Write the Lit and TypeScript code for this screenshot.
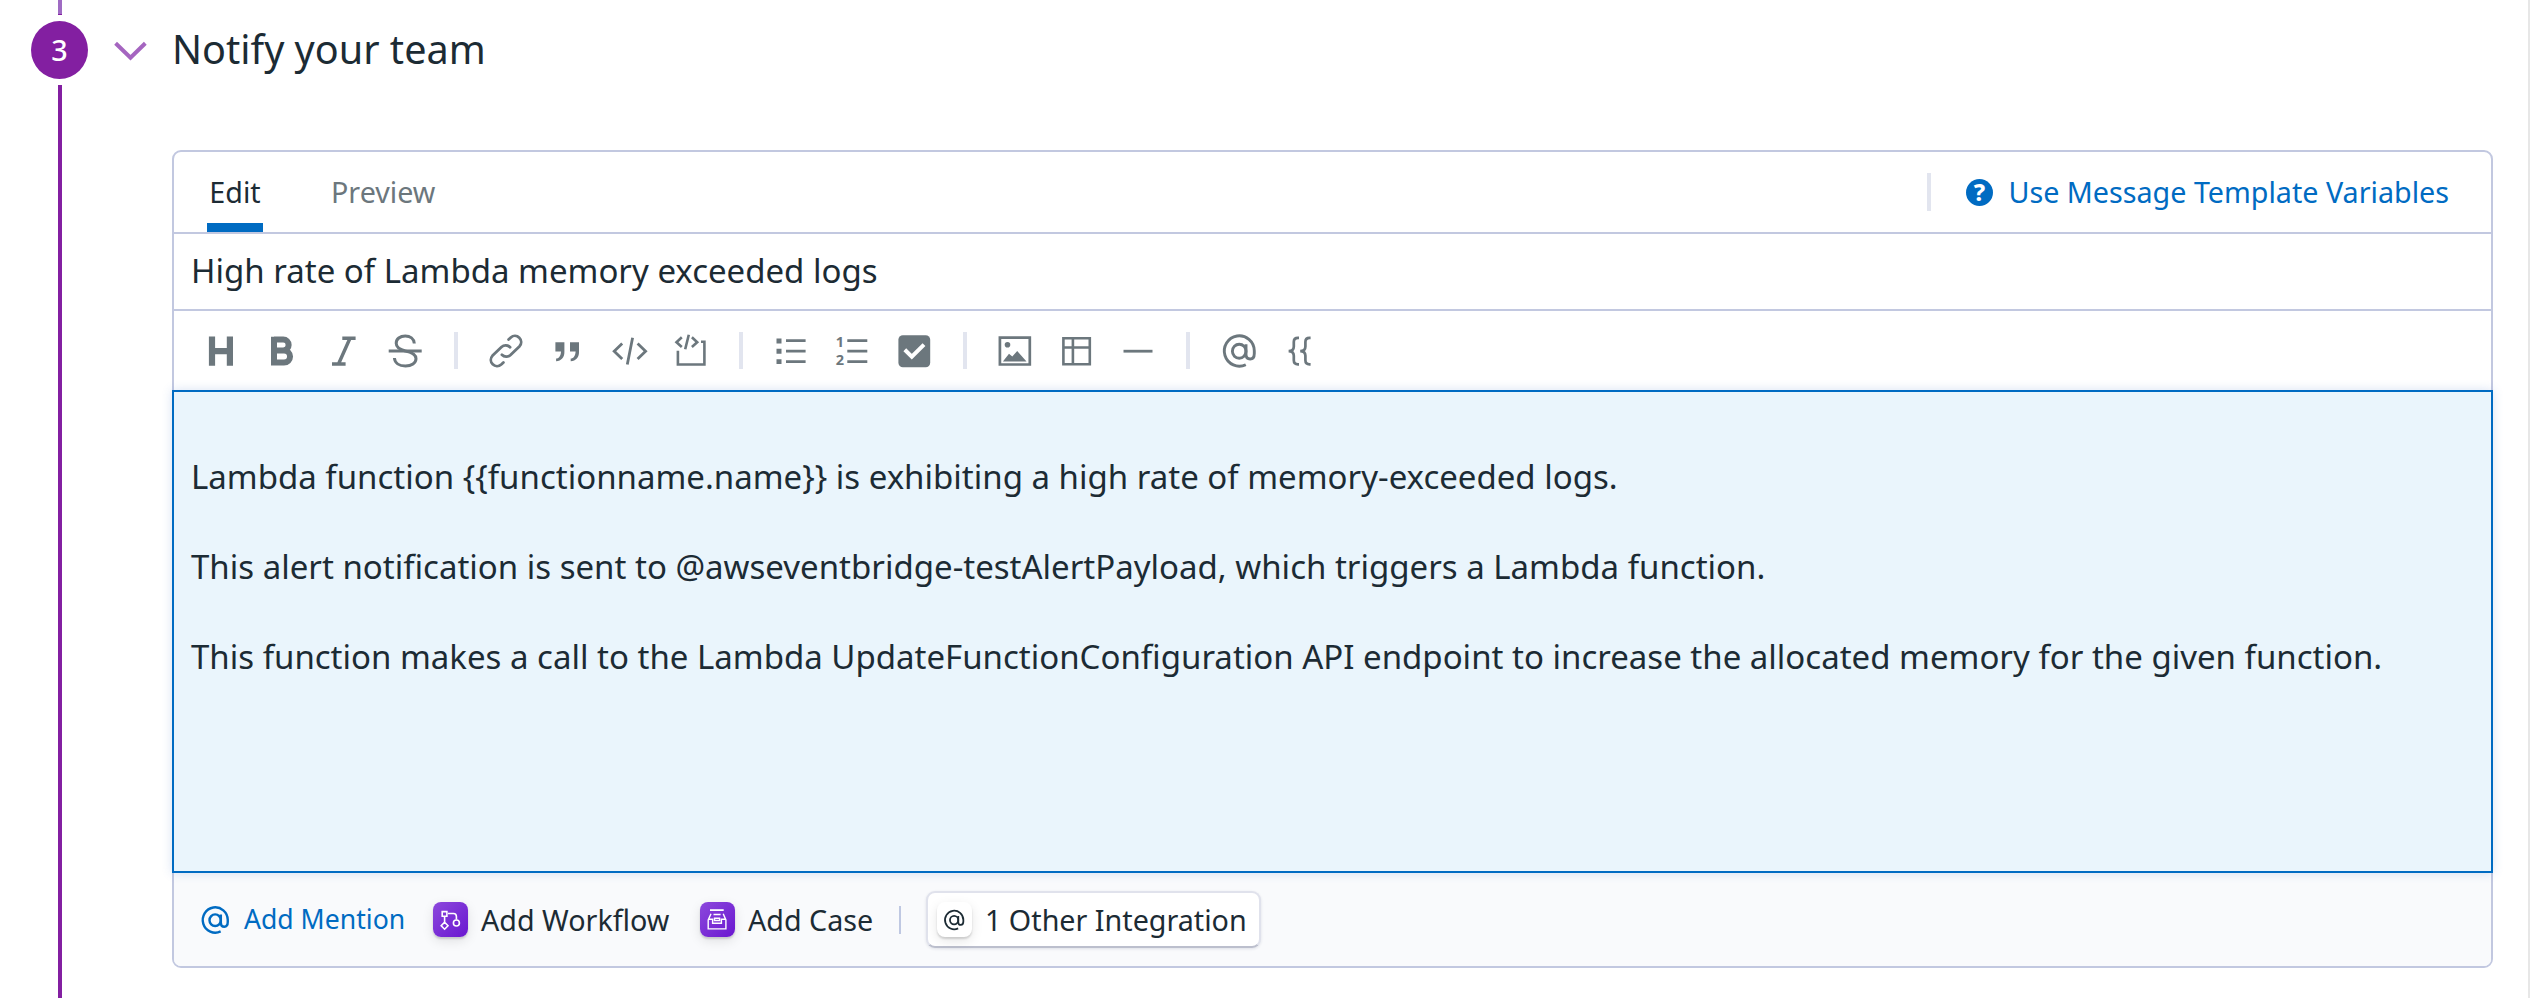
import { LitElement, html, css, svg, nothing } from "lit";
import { customElement, property } from "lit/decorators.js";

const line = (d: string, w = 2.8) =>
  svg`<path d=${d} fill="none" stroke="currentColor" stroke-width=${w} />`;
const round = (d: string, w = 2.8) =>
  svg`<path d=${d} fill="none" stroke="currentColor" stroke-width=${w} stroke-linecap="round" />`;
const solid = (d: string) => svg`<path d=${d} fill="currentColor" fill-rule="evenodd" />`;

const icons: Record<string, unknown> = {
  heading: line("M9 3.500V32.800M26.900 3.500V32.800M9 18.200H26.900", 6.2),
  bold: line("M10 6.600H19.200A5.300 5.300 0 0 1 19.200 17.500H10M19.200 17.500H20A6 6 0 0 1 20 29.600H10V3.700", 6),
  italic: line("M16.300 5.200H29.600M6 31H19.600M24 5.200L12.500 31", 3.4),
  strike: svg`${line("M1.700 18H34.700", 3)}${line(
    "M27.300 10.500C27 5.800 23 3 18.300 3C13 3 9.200 6 9.200 10.300C9.200 14.500 12.500 16.500 18.300 18C25 19.300 29 21.300 29 25.800C29 30 24.500 33 18.500 33C12 33 7.800 30 7.400 25",
    3,
  )}`,
  link: round(
    "M20.600 6.600L22.800 4.500A6.200 6.200 0 0 1 31.600 13.200L22.500 22A6.200 6.200 0 0 1 13.900 21.800M15.400 29.400L13.200 31.500A6.200 6.200 0 0 1 4.400 22.800L13.500 14A6.200 6.200 0 0 1 22.100 14.200",
  ),
  quote: solid(
    "M6.400 9.200h9v10c0 5-3 8.600-8.300 9v-2.600c3-.5 4.700-2.700 4.900-7.200H6.400zM21 9.200h9v10c0 5-3 8.600-8.300 9v-2.600c3-.5 4.700-2.700 4.900-7.200H21z",
  ),
  code: line("M11.200 10.500L3.200 18.200L11.200 26M26.600 10.500L34.600 18.200L26.600 26M21.600 4.800L16.300 31.500"),
  block: line(
    "M8.800 4.300L3.500 9.200L8.800 14M18.900 4.300L24.200 9.200L18.900 14M15.800 1.800L12.200 16.200M4.900 17.800V31.500H31.400V8.700H28",
    2.6,
  ),
  list: svg`${solid("M3.500 5.500h5v4.900h-5zM3.500 15.800h5v4.900h-5zM3.500 26.200h5v4.900h-5z")}${line(
    "M13 7.700H32.600M13 18.200H32.600M13 28.600H32.600",
  )}`,
  numbered: svg`<text x="0.800" y="14.300" class="digit">1</text><text x="0.800" y="31.800" class="digit">2</text>${line(
    "M12.300 7.700H32.300M12.300 18.200H32.300M12.300 28.600H32.300",
  )}`,
  check: svg`<rect x="2.400" y="2.200" width="31.800" height="32" rx="4.500" fill="currentColor" /><path d="M8.800 16.800L15.800 23.600L28 11.600" fill="none" stroke="#fff" stroke-width="4" />`,
  image: svg`${line("M2.900 4.600H32.800V31.500H2.900Z", 2.7)}<circle cx="10.500" cy="11.800" r="2.800" fill="currentColor" />${solid(
    "M5.900 28.400L12 20.800L15.300 23.400L20.200 18L29.500 28.400z",
  )}`,
  table: line("M4.400 5.200H30.800V31.300H4.400ZM13.900 5.200V31.300M4.400 14.500H30.800", 2.6),
  rule: line("M3.500 18.200H32.500"),
  at: svg`${line(
    "M24.800 31.700A15 15.200 0 1 1 33.300 17.800V20.500C33.300 24.200 31.600 26 29.200 26C26.400 26 25 24.200 25 21.500V11.300",
    2.9,
  )}<ellipse cx="18.200" cy="18.200" rx="6.800" ry="7" fill="none" stroke="currentColor" stroke-width="2.900" />`,
  braces: line(
    "M17 4.900H16C13 4.900 11.800 6.200 11.800 9V13.500C11.800 16.500 10.300 18.100 6.600 18.100C10.300 18.100 11.800 19.800 11.800 22.800V27.300C11.800 30 13 31.300 16 31.300H17M28.600 4.900H27.600C24.600 4.900 23.400 6.200 23.400 9V13.500C23.400 16.500 21.900 18.100 18.200 18.100C21.900 18.100 23.400 19.800 23.400 22.800V27.300C23.400 30 24.600 31.300 27.600 31.300H28.600",
    2.7,
  ),
  help: svg`<circle cx="18" cy="18" r="18" fill="currentColor" /><text x="18" y="28.800" class="mark">?</text>`,
  workflow: svg`${line("M9.200 9.600H13.900V14.200H9.200ZM11.600 15V20.200M15 11.500H20.500C22.600 11.500 23.400 12.500 23.400 14.500V17.500M11.600 20.200L15 23.700L11.600 27.200L8.200 23.700Z", 1.6)}<circle cx="23.400" cy="21" r="3" fill="none" stroke="currentColor" stroke-width="1.600" />`,
  case: svg`${line("M10 8.100H23.700", 1.8)}${line(
    "M11 11.800L8.200 18V26.900H25.900V18L23.200 11.800M13.500 12.500H20.600M8.200 17.300H12.600V21.200H21.400V17.300H25.900M14.500 16.200H19.600V18.500H14.500Z",
    1.4,
  )}`,
};

@customElement("ui-icon")
export class UiIcon extends LitElement {
  static styles = css`
    :host { display: block; flex: none; width: 36px; height: 36px; }
    svg { display: block; width: 100%; height: 100%; overflow: visible; }
    text { fill: currentColor; font-family: "Noto Sans", sans-serif; font-weight: 700; }
    .digit { font-size: 14.500px; }
    .mark { fill: #fff; font-size: 31px; font-weight: 800; text-anchor: middle; }
  `;
  @property() name = "";
  @property() box = "0 0 36 36";
  render() {
    return html`<svg viewBox=${this.box} aria-hidden="true">${icons[this.name] ?? nothing}</svg>`;
  }
}

const TOOLS = [
  ["heading", "bold", "italic", "strike"],
  ["link", "quote", "code", "block"],
  ["list", "numbered", "check"],
  ["image", "table", "rule"],
  ["at", "braces"],
];

const MESSAGE = `
Lambda function {{functionname.name}} is exhibiting a high rate of memory-exceeded logs.

This alert notification is sent to @awseventbridge-testAlertPayload, which triggers a Lambda function.

This function makes a call to the Lambda UpdateFunctionConfiguration API endpoint to increase the allocated memory for the given function.`;

@customElement("app-root")
export class AppRoot extends LitElement {
  static styles = css`
    * { box-sizing: border-box; }
    :host {
      display: flex;
      box-sizing: border-box;
      height: 998px;
      overflow: hidden;
      background: #fff;
      border-right: 2px solid #e7e7e7;
      font-family: "Noto Sans", sans-serif;
      font-size: 28.700px;
      line-height: 40px;
      color: #1c2b34;
      white-space: nowrap;
    }
    .rail { display: flex; flex-direction: column; gap: 6px; width: 88px; padding-left: 31px; }
    .before, .after { width: 4px; margin-left: 27px; background: #831fa1; }
    .before { height: 15px; background: #9f6bc3; border-bottom: 1px solid #831fa1; }
    .after { flex: 1; }
    .number {
      display: flex; align-items: center; justify-content: center;
      width: 57px; height: 58px; border-radius: 50%;
      background: #831fa1; color: #fff; font-weight: 500;
    }
    .main { flex: 1; display: flex; flex-direction: column; padding: 0 35px 30px 26px; }
    .head { display: flex; align-items: center; height: 150px; padding-bottom: 52px; }
    .chevron { width: 33px; height: 20px; margin: 3px 25px 0 0; }
    h2 { margin: 0; font-size: 39.600px; line-height: 54px; font-weight: 400; }
    .card {
      flex: 1; display: flex; flex-direction: column; margin-left: 58px;
      border: 2px solid #c2c8e0; border-radius: 9px; background: #fff;
    }
    .tabs { display: flex; align-items: stretch; height: 82px; border-bottom: 2px solid #c2c8e0; padding: 0 42px 0 33px; }
    .tab { display: flex; align-items: center; width: 56px; justify-content: center; border-bottom: 9px solid #006bc2; padding-top: 9px; }
    .tab.off { width: auto; margin-left: 68px; color: #6c777d; border-color: transparent; }
    .vars { display: flex; align-items: center; margin-left: auto; color: #006bc2; }
    .vars i { width: 4px; height: 38px; background: #e2e5ef; margin-right: 35px; }
    .vars ui-icon { width: 27px; height: 27px; margin: 1px 15px 0 0; }
    .subject { height: 77px; border-bottom: 2px solid #c2c8e0; padding: 14px 17px; font-size: 33px; line-height: 46px; }
    .tools { display: flex; align-items: center; gap: 25.600px; height: 79px; padding-left: 28.500px; color: #6c777d; }
    .tools i { width: 4px; height: 37px; background: #e2e5ef; margin: 0 4.700px; }
    .message {
      position: relative; height: 483px; margin: 0 -2px; padding: 17px;
      border: 2px solid #006bc2; background: #eaf5fc;
      box-shadow: 0 0 10px rgba(60, 110, 200, 0.2);
      font-size: 33px; line-height: 45px; white-space: pre-line;
    }
    .foot { flex: 1; display: flex; align-items: center; background: #f9fafc; border-radius: 0 0 7px 7px; padding-left: 26px; }
    .mention { display: flex; align-items: center; color: #006bc2; font-size: 26.600px; width: 233px; }
    .mention ui-icon { width: 30px; height: 30px; margin-right: 14px; }
    .mention span { margin-top: -2px; }
    .item { display: flex; align-items: center; gap: 13px; }
    .item.wide { width: 267px; }
    .item.narrow { width: 199px; }
    .tile {
      width: 35px; height: 35px; border-radius: 8px; color: #fff;
      background: linear-gradient(135deg, #8c48dc, #6a17d0);
      box-shadow: 0 2px 2px rgba(0, 0, 0, 0.14), 0 4px 12px rgba(0, 0, 0, 0.1);
    }
    .tile ui-icon { width: 35px; height: 35px; }
    .tile.plain { display: flex; align-items: center; justify-content: center; background: #fff; color: #1c2b34; padding-right: 2px; }
    .tile.plain ui-icon { width: 22px; height: 24px; }
    .bar { width: 2px; height: 28px; background: #bfc8e2; margin-right: 25px; }
    .chip {
      display: flex; align-items: center; gap: 13px; height: 57px; width: 335px; padding-left: 9px;
      border: 2px solid #e0e2ec; border-bottom-color: #bcbfcd; border-radius: 9px; background: #fff;
      box-shadow: 0 1px 3px rgba(30, 40, 80, 0.12);
    }
  `;

  render() {
    return html`
      <div class="rail">
        <div class="before"></div>
        <div class="number">3</div>
        <div class="after"></div>
      </div>
      <div class="main">
        <div class="head">
          <svg class="chevron" viewBox="0 0 33 20">
            <path d="M1.600 2.200L16.500 16.600L31.300 2.200" fill="none" stroke="#a565c0" stroke-width="4" />
          </svg>
          <h2>Notify your team</h2>
        </div>
        <section class="card">
          <div class="tabs">
            <div class="tab">Edit</div>
            <div class="tab off">Preview</div>
            <div class="vars"><i></i><ui-icon name="help"></ui-icon>Use Message Template Variables</div>
          </div>
          <div class="subject">High rate of Lambda memory exceeded logs</div>
          <div class="tools">
            ${TOOLS.map(
              (group, i) => html`${i ? html`<i></i>` : nothing}${group.map((n) => html`<ui-icon name=${n}></ui-icon>`)}`,
            )}
          </div>
          <div class="message">${MESSAGE}</div>
          <div class="foot">
            <div class="mention"><ui-icon name="at"></ui-icon><span>Add Mention</span></div>
            <div class="item wide">
              <div class="tile"><ui-icon name="workflow" box="0 0 35 35"></ui-icon></div>Add Workflow
            </div>
            <div class="item narrow">
              <div class="tile"><ui-icon name="case" box="0 0 35 35"></ui-icon></div>Add Case
            </div>
            <div class="bar"></div>
            <div class="chip">
              <div class="tile plain"><ui-icon name="at"></ui-icon></div>1 Other Integration
            </div>
          </div>
        </section>
      </div>
    `;
  }
}
